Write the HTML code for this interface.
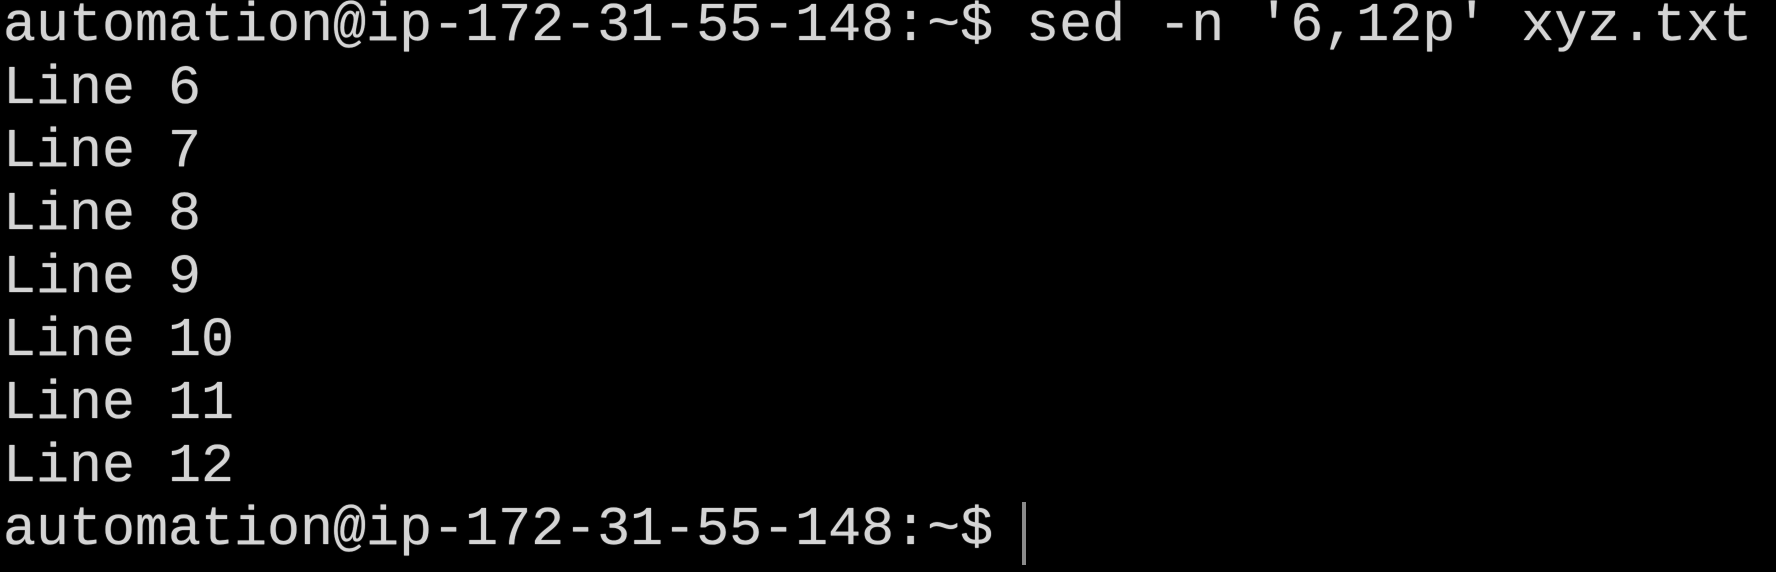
<!DOCTYPE html>
<html><head><meta charset="utf-8"><style>
html,body{margin:0;padding:0;background:#000;width:1776px;height:572px;overflow:hidden}
pre{position:absolute;left:3px;top:-6px;margin:0;font-family:"Liberation Mono",monospace;font-size:55px;line-height:63px;color:#d4d4d4;text-shadow:0 0 1px #d4d4d4}
.cur{position:absolute;left:1022px;top:502px;width:4px;height:63px;background:#8a8a8a}
</style></head><body>
<pre>automation@ip-172-31-55-148:~$ sed -n '6,12p' xyz.txt
Line 6
Line 7
Line 8
Line 9
Line 10
Line 11
Line 12
automation@ip-172-31-55-148:~$ </pre>
<div class="cur"></div>
</body></html>
